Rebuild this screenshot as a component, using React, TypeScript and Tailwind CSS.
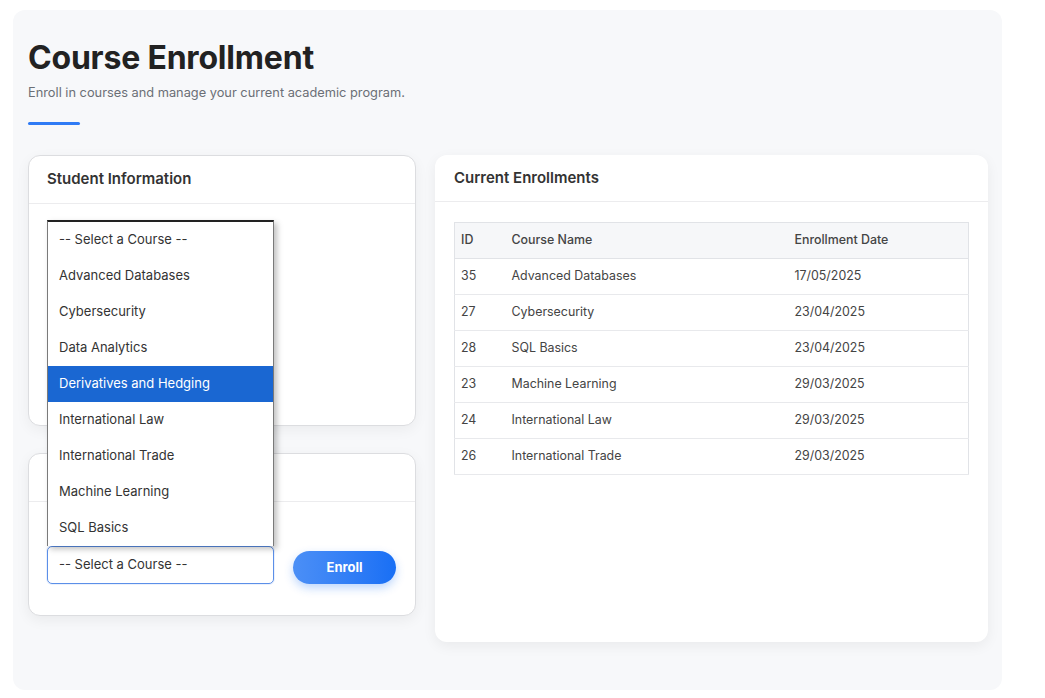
import React from 'react';

const COURSES = [
  '-- Select a Course --',
  'Advanced Databases',
  'Cybersecurity',
  'Data Analytics',
  'Derivatives and Hedging',
  'International Law',
  'International Trade',
  'Machine Learning',
  'SQL Basics',
];

const ENROLLMENTS = [
  { id: 35, name: 'Advanced Databases', date: '17/05/2025' },
  { id: 27, name: 'Cybersecurity', date: '23/04/2025' },
  { id: 28, name: 'SQL Basics', date: '23/04/2025' },
  { id: 23, name: 'Machine Learning', date: '29/03/2025' },
  { id: 24, name: 'International Law', date: '29/03/2025' },
  { id: 26, name: 'International Trade', date: '29/03/2025' },
];

const HIGHLIGHTED = 'Derivatives and Hedging';

export default function App() {
  return (
    <div className="min-h-screen bg-white font-['Inter',sans-serif] text-[#333]">
      <div className="ml-[13px] pt-[10px]">
        <div className="w-[989px] h-[680px] rounded-[12px] bg-[#f7f8fa] px-[15px] pt-[28px]">
          {/* Header */}
          <h1 className="text-[32px] leading-[40px] font-bold tracking-[-0.2px] text-[#222]">Course Enrollment</h1>
          <p className="mt-[5px] text-[12.8px] leading-[20px] text-[#6b6f76]">
            Enroll in courses and manage your current academic program.
          </p>
          <div className="mt-[19px] h-[3px] w-[52px] rounded-full bg-[#2f7bf5]" />

          {/* Main */}
          <div className="mt-[30px] grid grid-cols-[388px_553px] gap-[19px] items-start">
            {/* Left column */}
            <div className="flex flex-col gap-[27px]">
              <div className="h-[271px] rounded-[12px] border border-[#dcdde0] bg-white shadow-[0_4px_14px_rgba(0,0,0,0.05)]">
                <div className="h-[48px] flex items-center px-[18px] border-b border-[#ececee]">
                  <h2 className="text-[15px] font-semibold text-[#333]">Student Information</h2>
                </div>
              </div>

              <div className="h-[163px] rounded-[12px] border border-[#dcdde0] bg-white shadow-[0_4px_14px_rgba(0,0,0,0.06)]">
                <div className="h-[48px] border-b border-[#ececee]" />
                <div className="px-[18px] pt-[44px] flex items-end gap-[19px]">
                  <div className="relative w-[227px]">
                    {/* open native list */}
                    <div className="absolute left-0 bottom-full w-[227px] border-t-2 border-t-[#222] border-x border-x-[#7a7a7a] bg-white shadow-[3px_3px_6px_rgba(0,0,0,0.25)] z-10">
                      {COURSES.map((c) => (
                        <div
                          key={c}
                          className={`h-[36px] flex items-center px-[11px] text-[13px] ${
                            c === HIGHLIGHTED ? 'bg-[#1a67d2] text-white' : 'text-[#333]'
                          }`}
                        >
                          {c}
                        </div>
                      ))}
                    </div>
                    <div className="h-[38px] flex items-center px-[11px] rounded-[5px] border border-[#5b8fe8] bg-white text-[13px] text-[#333] shadow-[0_0_0_1px_rgba(91,143,232,0.12)]">
                      -- Select a Course --
                    </div>
                  </div>
                  <button className="h-[33px] w-[103px] rounded-full bg-gradient-to-r from-[#4b8ff6] to-[#186ff5] text-white text-[13px] font-bold shadow-[0_4px_10px_rgba(37,118,245,0.3)]">
                    Enroll
                  </button>
                </div>
              </div>
            </div>

            {/* Right column */}
            <div className="h-[487px] rounded-[12px] bg-white shadow-[0_4px_14px_rgba(0,0,0,0.06)]">
              <div className="h-[47px] flex items-center px-[19px] border-b border-[#ececee]">
                <h2 className="text-[15px] font-semibold text-[#333]">Current Enrollments</h2>
              </div>
              <div className="px-[19px] pt-[20px]">
                <table className="w-full border-collapse border border-[#e1e3e7] text-[12.4px]">
                  <thead>
                    <tr className="bg-[#f6f7f9] border-b border-[#e1e3e7]">
                      <th className="h-[36px] w-[51px] pl-[6px] text-left font-medium text-[#444]">ID</th>
                      <th className="h-[36px] w-[283px] pl-[6px] text-left font-medium text-[#444]">Course Name</th>
                      <th className="h-[36px] pl-[6px] text-left font-medium text-[#444]">Enrollment Date</th>
                    </tr>
                  </thead>
                  <tbody>
                    {ENROLLMENTS.map((e) => (
                      <tr key={e.id} className="border-b border-[#e8e9ec]">
                        <td className="h-[36px] pl-[6px] text-[#444]">{e.id}</td>
                        <td className="h-[36px] pl-[6px] text-[#444]">{e.name}</td>
                        <td className="h-[36px] pl-[6px] text-[#444]">{e.date}</td>
                      </tr>
                    ))}
                  </tbody>
                </table>
              </div>
            </div>
          </div>
        </div>
      </div>
    </div>
  );
}
